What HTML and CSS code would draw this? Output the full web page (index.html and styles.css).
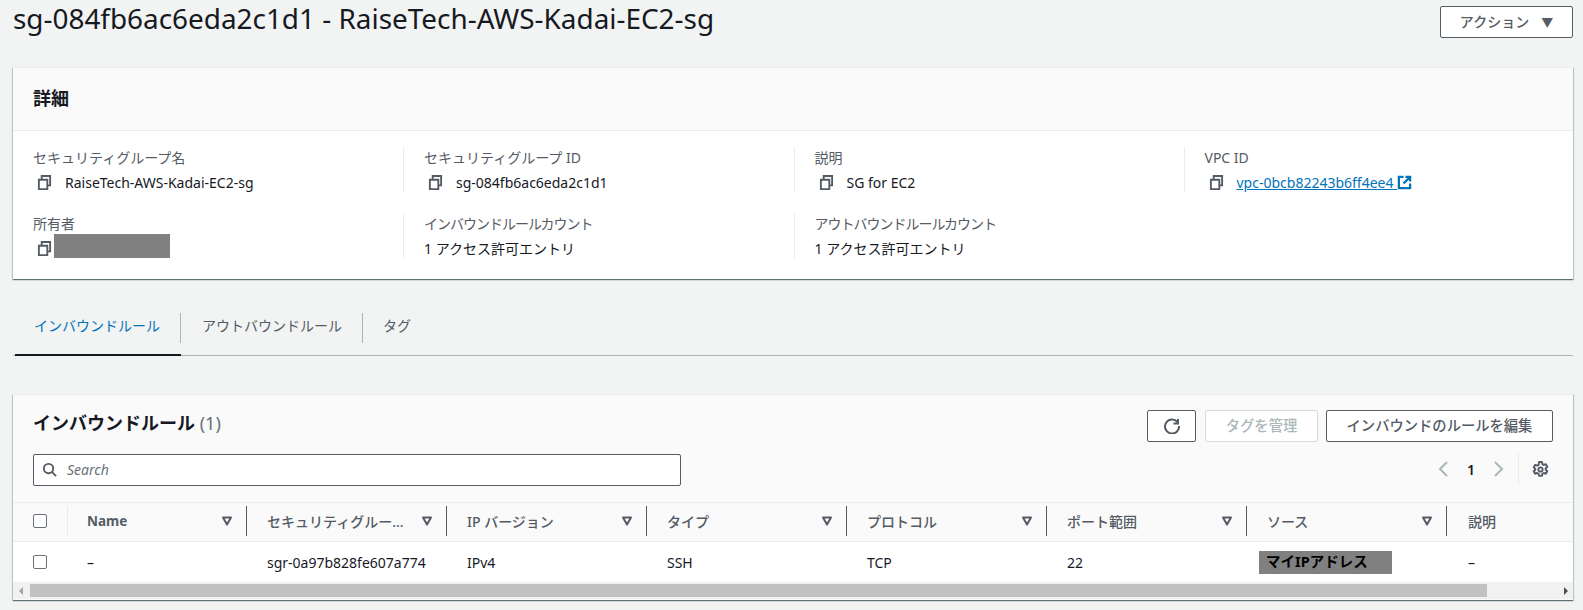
FILE: index.html
```html
<!DOCTYPE html>
<html lang="ja">
<head>
    <meta charset="UTF-8">
    <meta name="viewport" content="width=device-width, initial-scale=1.0">
    <title>sg-084fb6ac6eda2c1d1 - RaiseTech-AWS-Kadai-EC2-sg</title>
    <link rel="stylesheet" href="styles.css">
</head>
<body>
    <svg class="defs" width="0" height="0">
        <symbol id="copy" viewBox="0 0 16 16">
            <path d="M2 5h9v10H2z M5 5V1h9v10h-3" fill="none" stroke="currentColor" stroke-width="2"/>
        </symbol>
        <symbol id="sort" viewBox="0 0 12 12">
            <path d="M2 2.5h8L6 9.5z" fill="none" stroke="currentColor" stroke-width="2" stroke-linejoin="round"/>
        </symbol>
    </svg>

    <header class="page-head">
        <h1>sg-084fb6ac6eda2c1d1 - RaiseTech-AWS-Kadai-EC2-sg</h1>
        <button class="btn btn-action">アクション<span class="caret">▼</span></button>
    </header>

    <section class="panel">
        <div class="panel-head"><h2>詳細</h2></div>
        <div class="details">
            <div class="item">
                <div class="label">セキュリティグループ名</div>
                <div class="value copy"><svg class="copy-icon"><use href="#copy"/></svg>RaiseTech-AWS-Kadai-EC2-sg</div>
            </div>
            <div class="item">
                <div class="label">セキュリティグループ ID</div>
                <div class="value copy"><svg class="copy-icon"><use href="#copy"/></svg>sg-084fb6ac6eda2c1d1</div>
            </div>
            <div class="item">
                <div class="label">説明</div>
                <div class="value copy"><svg class="copy-icon"><use href="#copy"/></svg>SG for EC2</div>
            </div>
            <div class="item">
                <div class="label">VPC ID</div>
                <div class="value copy"><svg class="copy-icon"><use href="#copy"/></svg><a href="#">vpc-0bcb82243b6ff4ee4 <svg class="ext-icon" viewBox="0 0 16 16"><path d="M7 2H2v12h12V9 M9 2h5v5 M14 2L7 9" fill="none" stroke="currentColor" stroke-width="2.4"/></svg></a></div>
            </div>
            <div class="item">
                <div class="label">所有者</div>
                <div class="value owner"><svg class="copy-icon"><use href="#copy"/></svg><span class="redact-owner"></span></div>
            </div>
            <div class="item">
                <div class="label label-tight">インバウンドルールカウント</div>
                <div class="value">1 アクセス許可エントリ</div>
            </div>
            <div class="item">
                <div class="label label-tight">アウトバウンドルールカウント</div>
                <div class="value">1 アクセス許可エントリ</div>
            </div>
        </div>
    </section>

    <nav class="tabs">
        <a class="tab active" href="#"><span>インバウンドルール</span></a>
        <a class="tab second" href="#"><span>アウトバウンドルール</span></a>
        <a class="tab last" href="#"><span>タグ</span></a>
    </nav>

    <section class="panel rules">
        <div class="rules-head">
            <div class="rules-left">
                <h2 class="rules-title">インバウンドルール <span class="count">(1)</span></h2>
                <div class="search">
                    <svg class="search-icon" viewBox="0 0 16 16"><circle cx="7" cy="7" r="5" fill="none" stroke="currentColor" stroke-width="2"/><path d="M10.5 10.5L15 15" stroke="currentColor" stroke-width="2"/></svg>
                    <span>Search</span>
                </div>
            </div>
            <div class="rules-right">
                <div class="actions">
                    <button class="btn btn-icon"><svg viewBox="0 0 16 16"><path d="M13.5 4.2A7 7 0 1 0 15 8" fill="none" stroke="currentColor" stroke-width="2"/><path d="M14 1v4.5H9.500" fill="none" stroke="currentColor" stroke-width="2"/></svg></button>
                    <button class="btn btn-disabled">タグを管理</button>
                    <button class="btn btn-edit">インバウンドのルールを編集</button>
                </div>
                <div class="pager">
                    <svg class="chev" viewBox="0 0 12 16"><path d="M10 1L3 8l7 7" fill="none" stroke="currentColor" stroke-width="2"/></svg>
                    <span class="page-num">1</span>
                    <svg class="chev" viewBox="0 0 12 16"><path d="M2 1l7 7-7 7" fill="none" stroke="currentColor" stroke-width="2"/></svg>
                    <div class="gear-wrap">
                        <svg class="gear" viewBox="0 0 16 16"><path d="M6.600 1h2.800l.4 2 1.300.7 1.900-.7 1.400 2.400-1.500 1.400v1.400l1.500 1.400-1.400 2.400-1.900-.7-1.300.7-.4 2H6.600l-.4-2-1.300-.7-1.900.7-1.400-2.400 1.500-1.400V7.400L1.600 6 3 3.600l1.900.7 1.300-.7z" fill="none" stroke="currentColor" stroke-width="1.800" stroke-linejoin="round"/><circle cx="8" cy="8" r="2" fill="none" stroke="currentColor" stroke-width="1.800"/></svg>
                    </div>
                </div>
            </div>
        </div>

        <table class="rule-table">
            <thead>
                <tr>
                    <th class="col-check"><span class="checkbox"></span></th>
                    <th class="col-name"><div class="th-in"><span class="name-text">Name</span><svg class="sort"><use href="#sort"/></svg></div></th>
                    <th><div class="th-in"><span class="clip">セキュリティグルー...</span><svg class="sort"><use href="#sort"/></svg></div></th>
                    <th><div class="th-in">IP バージョン<svg class="sort"><use href="#sort"/></svg></div></th>
                    <th><div class="th-in">タイプ<svg class="sort"><use href="#sort"/></svg></div></th>
                    <th><div class="th-in">プロトコル<svg class="sort"><use href="#sort"/></svg></div></th>
                    <th><div class="th-in">ポート範囲<svg class="sort"><use href="#sort"/></svg></div></th>
                    <th><div class="th-in">ソース<svg class="sort"><use href="#sort"/></svg></div></th>
                    <th class="col-desc">説明</th>
                </tr>
            </thead>
            <tbody>
                <tr>
                    <td class="col-check"><span class="checkbox"></span></td>
                    <td class="col-name">–</td>
                    <td>sgr-0a97b828fe607a774</td>
                    <td>IPv4</td>
                    <td>SSH</td>
                    <td>TCP</td>
                    <td>22</td>
                    <td class="col-source"><span class="redact-source">マイIPアドレス</span></td>
                    <td class="col-desc">–</td>
                </tr>
            </tbody>
        </table>

        <div class="scrollbar">
            <span class="arrow arrow-left"></span>
            <div class="track"><div class="thumb"></div></div>
            <span class="arrow arrow-right"></span>
        </div>
    </section>
</body>
</html>
```

FILE: styles.css
```css
body {
    margin: 0;
    padding: 0 10px 0 13px;
    height: 610px;
    box-sizing: border-box;
    overflow: hidden;
    background-color: #f2f3f3;
    color: #16191f;
    font-family: "Noto Sans", "Noto Sans CJK JP", sans-serif;
    font-size: 14px;
}

.defs { position: absolute; }

/* Page header */
.page-head {
    display: flex;
    justify-content: space-between;
    align-items: flex-start;
    height: 67px;
}
h1 {
    margin: 0;
    font-size: 27.9px;
    font-weight: 400;
    line-height: 36px;
}

/* Buttons */
.btn {
    height: 32px;
    box-sizing: border-box;
    border: 1px solid #545b64;
    border-radius: 2px;
    background-color: #fff;
    color: #545b64;
    font-family: inherit;
    font-size: 14.3px;
    font-weight: 500;
    padding: 0 0 3px;
}
.btn-action { width: 133px; margin-top: 6px; padding-bottom: 2px; font-size: 14px; }
.caret { margin-left: 12px; font-size: 12px; }
.btn-icon { width: 49px; margin-right: 1px; padding: 0; display: flex; align-items: center; justify-content: center; }
.btn-icon svg { width: 16px; height: 16px; }
.btn-disabled { width: 113px; border-color: #d5dbdb; color: #aab7b8; }
.btn-edit { width: 227px; }

/* Panels */
.panel {
    background-color: #fff;
    border-top: 1px solid #eaeded;
    box-shadow: 0 1px 1px 0 rgba(0, 28, 36, 0.45), 1px 1px 1px 0 rgba(0, 28, 36, 0.15), -1px 1px 1px 0 rgba(0, 28, 36, 0.15);
}
.panel-head {
    height: 58px;
    padding: 0 0 4px 20px;
    display: flex;
    align-items: center;
    background-color: #fafafa;
    border-bottom: 1px solid #eaeded;
}
.panel-head h2 { margin: 0; font-size: 18px; font-weight: 700; }

.details {
    display: grid;
    grid-template-columns: 390px 390.5px 390px 1fr;
    grid-auto-rows: 46px;
    row-gap: 20px;
    padding: 16px 0 20px;
}
.item { padding-left: 20px; border-left: 1px solid #eaeded; }
.item:nth-child(4n+1) { border-left: none; }
.label { color: #545b64; font-size: 14px; line-height: 22px; }
.label-tight { letter-spacing: -1px; }
.value { display: flex; align-items: center; height: 26px; font-size: 14px; }
.copy-icon { width: 15px; height: 15px; margin: 0 13px 0 4px; color: #545b64; flex: none; }
.owner .copy-icon { margin-right: 2px; }
.redact-owner { align-self: flex-start; width: 116px; height: 24px; margin-top: -1px; background-color: #808080; }
.item a { color: #0073bb; }
.ext-icon { width: 15px; height: 15px; vertical-align: -2px; }

/* Tabs */
.tabs {
    display: flex;
    margin-top: 34px;
    padding-left: 2px;
    border-bottom: 1px solid #aab7b8;
}
.tab {
    padding-bottom: 11px;
    border-bottom: 2px solid transparent;
    margin-bottom: -1px;
    color: #545b64;
    font-size: 14px;
    text-decoration: none;
}
.tab span {
    display: block;
    height: 30px;
    line-height: 26px;
    padding: 0 20px;
    border-right: 1px solid #aab7b8;
}
.tab.active span { padding: 0 20px 0 19px; }
.tab.second span { padding-left: 21px; }
.tab.last span { border-right: none; }
.tab.active { color: #0073bb; border-bottom-color: #16191f; }

/* Rules panel */
.rules { margin-top: 38px; background-color: #fafafa; height: 205px; }
.rules-head {
    display: flex;
    justify-content: space-between;
    height: 107px;
    padding: 15px 20px 0;
    box-sizing: border-box;
}
.rules-title { margin: 0 0 18px; font-size: 18px; font-weight: 700; line-height: 26px; }
.count { color: #687078; font-weight: 400; }
.search {
    display: flex;
    align-items: center;
    width: 648px;
    height: 32px;
    box-sizing: border-box;
    border: 1px solid #545b64;
    border-radius: 2px;
    background-color: #fff;
    color: #687078;
    font-size: 14px;
    font-style: italic;
    padding-bottom: 1px;
}
.search-icon { width: 15px; height: 15px; margin: 0 10px 0 8px; color: #545b64; }

.actions { display: flex; gap: 8px; }
.pager { display: flex; align-items: center; justify-content: flex-end; height: 32px; margin-top: 11px; color: #aab7b8; }
.chev { width: 12px; height: 16px; }
.page-num { width: 44px; text-align: center; color: #16191f; font-size: 14px; font-weight: 600; }
.gear-wrap {
    display: flex;
    align-items: center;
    height: 32px;
    margin-left: 13px;
    padding: 0 4px 0 13px;
    border-left: 1px solid #eaeded;
}
.gear { width: 17px; height: 17px; color: #545b64; }

/* Table */
.rule-table {
    width: 100%;
    table-layout: fixed;
    border-collapse: collapse;
    border-top: 1px solid #eaeded;
}
.rule-table th {
    height: 39px;
    padding: 0 0 2px;
    box-sizing: border-box;
    width: 200px;
    background-color: #fafafa;
    border-bottom: 1px solid #eaeded;
    color: #545b64;
    font-size: 14px;
    font-weight: 500;
    text-align: left;
}
.rule-table th.col-check { width: 54px; padding-left: 20px; }
.rule-table th.col-name { width: 180px; }
.rule-table th.col-desc { width: auto; padding-left: 21px; }
.name-text { font-weight: 700; font-size: 13.5px; }
.th-in {
    display: flex;
    align-items: center;
    justify-content: space-between;
    height: 30px;
    padding: 0 13px 0 20px;
    border-right: 1px solid #545b64;
}
.col-name .th-in { position: relative; }
.col-name .th-in::before {
    content: "";
    position: absolute;
    left: 0;
    top: 0;
    bottom: 0;
    border-left: 1px solid #eaeded;
}
.sort { width: 12px; height: 12px; color: #545b64; flex: none; }

.rule-table td {
    height: 40px;
    padding: 0 0 0 20px;
    background-color: #fff;
    font-size: 14px;
}
.rule-table td.col-check { padding-left: 20px; }
.rule-table td.col-desc { padding-left: 21px; }
.rule-table td.col-source { padding-left: 12px; }
.checkbox {
    display: block;
    width: 14px;
    height: 14px;
    box-sizing: border-box;
    border: 1px solid #687078;
    border-radius: 2px;
    background-color: #fff;
}
.redact-source {
    display: block;
    width: 133px;
    height: 23px;
    padding-left: 7px;
    box-sizing: border-box;
    background-color: #808080;
    color: #000;
    font-size: 14.500px;
    font-weight: 700;
    line-height: 20px;
}

/* Scrollbar */
.scrollbar {
    display: flex;
    align-items: center;
    height: 17px;
    background-color: #f1f1f1;
}
.track { flex: 1; height: 13px; }
.thumb { width: 1457px; height: 13px; background-color: #c1c1c1; }
.arrow { width: 17px; height: 13px; display: flex; align-items: center; justify-content: center; }
.arrow::before { content: ""; border: 4px solid transparent; }
.arrow-left::before { border-right-color: #a3a3a3; margin-right: 6px; }
.arrow-right::before { border-left-color: #505050; margin-left: 6px; }
```
